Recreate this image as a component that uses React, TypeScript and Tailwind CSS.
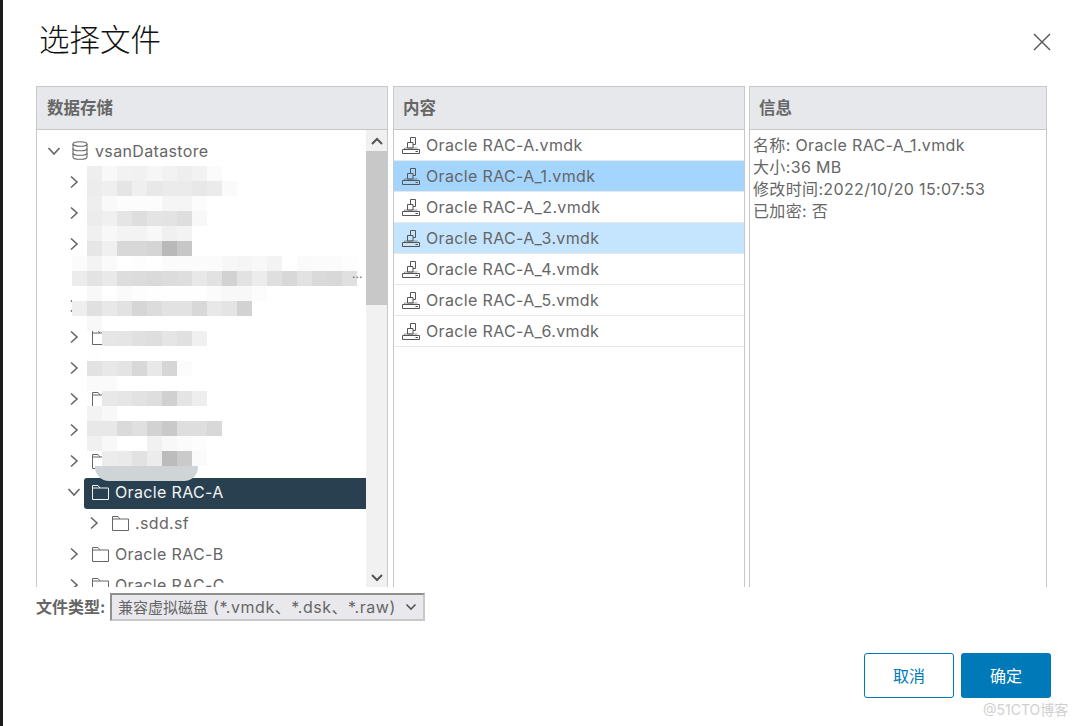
const sans = 'font-["Inter","Noto_Sans_CJK_SC",sans-serif]'

// pixelated cover over the blurred names, rows are 15px tall, cells start at x=72
const mosaic = [
  '.. ee f8 f2 f1 f6 f2 ee f2 fb',
  '.. ec ef e5 ef e8 eb eb e8 eb fa',
  '.. ee f9 fc fc fc f5 f5 fc',
  '.. ec f0 e5 de e4 e3 de f8',
  '.. f0 f8 f3 f3 f8 f0 f3',
  '.. e6 f0 d8 d8 d5 b9 c7',
  'fb f3 fa ff fd ff fb fb fb fb f7 f5 f8 f3 ff fa fb fb fd',
  'ec e3 e9 dd dc da dc de e8 e2 d2 e2 ec df d8 e2 da d8 e0',
  'ff f8 ff fa fd fe fe fe fe fb f8 f8 fc',
  'ee e0 e8 e2 d6 dc e2 e2 d8 e8 e4 d2',
  'ff f8',
  '.. .. e6 e5 e0 de e5 e0 f0',
  'ff fe ff ff ff ff ff ff ff',
  '.. e2 e8 e4 d8 e8 d6 fc',
  '.. fa fa ff ff',
  '.. .. e8 e6 e2 de d0 e4 ee',
  '.. f3 f8 ff ff ff ff ff',
  '.. e8 e8 da e0 d2 c9 de de d8',
  '.. f0 f8 ff ff f1 f8 fb fd',
  '.. .. ec ea e2 ec bc ca fa',
]

const treeRows: { depth: number; open?: boolean; folder?: boolean; label?: string; selected?: boolean; chevron?: boolean }[] = [
  { depth: 1, chevron: true },
  { depth: 1, chevron: true },
  { depth: 1, chevron: true },
  { depth: 1 },
  { depth: 1, chevron: true },
  { depth: 1, chevron: true, folder: true },
  { depth: 1, chevron: true },
  { depth: 1, chevron: true, folder: true },
  { depth: 1, chevron: true },
  { depth: 1, chevron: true, folder: true },
  { depth: 1, chevron: true, open: true, folder: true, label: 'Oracle RAC-A', selected: true },
  { depth: 2, chevron: true, folder: true, label: '.sdd.sf' },
  { depth: 1, chevron: true, folder: true, label: 'Oracle RAC-B' },
  { depth: 1, chevron: true, folder: true, label: 'Oracle RAC-C' },
]

const files = [
  'Oracle RAC-A.vmdk',
  'Oracle RAC-A_1.vmdk',
  'Oracle RAC-A_2.vmdk',
  'Oracle RAC-A_3.vmdk',
  'Oracle RAC-A_4.vmdk',
  'Oracle RAC-A_5.vmdk',
  'Oracle RAC-A_6.vmdk',
]

function Chevron({ open, className }: { open?: boolean; className?: string }) {
  return (
    <svg width="14" height="14" viewBox="0 0 14 14" fill="none" stroke="#666" strokeWidth="1.6" className={className}>
      {open ? <path d="M1.5 4 L7 10 L12.5 4" /> : <path d="M4 1.5 L10 7 L4 12.5" />}
    </svg>
  )
}

function FolderIcon({ color = '#666' }: { color?: string }) {
  return (
    <svg width="17" height="16" viewBox="0 0 17 16" fill="none" stroke={color} strokeWidth="1" className="shrink-0">
      <path d="M0.5 15.5 V1.5 H6 L8 4 H16.5 V15.5 Z M0.5 4 H8" />
    </svg>
  )
}

function DiskIcon() {
  return (
    <svg width="18" height="17" viewBox="0 0 18 17" fill="none" stroke="#555" strokeWidth="1" className="shrink-0">
      <path d="M0.5 12.5 H17.5 V16.5 H0.5 Z" />
      <path d="M13.5 14.5 H16" />
      <path d="M2.5 12.5 V11 H15.5" strokeOpacity="0.6" />
      <path d="M5.5 5.5 H11 V11 H5.5 Z" />
      <path d="M8.5 5.5 V0.5 H13.5 V7.5 H11" />
    </svg>
  )
}

function DatastoreIcon() {
  return (
    <svg width="16" height="19" viewBox="0 0 16 19" fill="none" stroke="#666" strokeWidth="1.1" className="shrink-0">
      <ellipse cx="8" cy="3" rx="7" ry="2.3" />
      <path d="M1 3 V16 C1 17.3 4 18.3 8 18.3 C12 18.3 15 17.3 15 16 V3" />
      <path d="M1 7.5 C1 8.8 4 9.8 8 9.8 C12 9.8 15 8.8 15 7.5" />
      <path d="M1 12 C1 13.3 4 14.3 8 14.3 C12 14.3 15 13.3 15 12" />
    </svg>
  )
}

function PanelHeader({ title, first }: { title: string; first?: boolean }) {
  return (
    <div
      className={`flex h-[43px] shrink-0 items-center border-b border-[#c8c8c8] bg-[#e6e8ec] text-[16.5px] font-bold text-[#666] ${
        first ? 'pl-[10px]' : 'pl-[9px]'
      }`}
    >
      {title}
    </div>
  )
}

function Mosaic() {
  return (
    <>
      <div className="pointer-events-none absolute left-[35px] top-[36px] flex flex-col">
        {mosaic.map((row, r) => (
          <div key={r} className="flex">
            {row.split(' ').map((c, i) => (
              <div
                key={i}
                className="h-[15px] w-[15px]"
                style={{ backgroundColor: c === '..' ? 'transparent' : `#${c}${c}${c}` }}
              />
            ))}
          </div>
        ))}
      </div>
      <div className="pointer-events-none absolute left-[58px] top-[336px] h-[15px] w-[103px] rounded-b-[14px] bg-[#cfd4d6]" />
    </>
  )
}

export default function App() {
  return (
    <div className={`flex h-[726px] w-[1080px] overflow-hidden bg-white ${sans}`}>
      <div className="w-[3px] shrink-0 bg-[#1a1a1a]" />
      <div className="flex min-w-0 flex-1 flex-col">
        <div className="relative flex h-[86px] shrink-0 items-center justify-between pb-[6px] pl-[36px] pr-[29px]">
          <h1 className="text-[30.5px] font-light leading-none text-[#111]">选择文件</h1>
          <svg width="18" height="18" viewBox="0 0 18 18" stroke="#555" strokeWidth="1.4" className="mt-[4px]">
            <path d="M1 1 L17 17 M17 1 L1 17" />
          </svg>
        </div>

        <div className="ml-[33px] flex h-[501px] shrink-0 gap-[5px]">
          <div className="flex w-[352px] flex-col border-x border-t border-[#c8c8c8]">
            <PanelHeader title="数据存储" first />
            <div className="relative flex min-h-0 flex-1 overflow-hidden">
              <div className="min-w-0 flex-1 pt-[5px] text-[16px] tracking-[0.35px] text-[#666]">
                <div className="flex h-[31px] items-center pl-[10px]">
                  <Chevron open />
                  <span className="ml-[11px]"><DatastoreIcon /></span>
                  <span className="ml-[7px]">vsanDatastore</span>
                </div>
                {treeRows.map((row, i) => (
                  <div
                    key={i}
                    className={`flex h-[31px] items-center ${row.depth === 2 ? 'pl-[50px]' : 'pl-[30px]'}`}
                  >
                    <span className="flex w-[14px] shrink-0">
                      {row.chevron && <Chevron open={row.open} />}
                    </span>
                    {row.selected ? (
                      <div className="ml-[3px] mt-[4px] flex h-[31px] flex-1 items-center gap-[6px] rounded-l-[3px] bg-[#28404f] pb-[4px] pl-[8px] text-[#f2f4f5]">
                        <FolderIcon color="#f2f4f5" />
                        <span>{row.label}</span>
                      </div>
                    ) : (
                      <div className="ml-[11px] flex items-center gap-[6px]">
                        {row.folder && <FolderIcon />}
                        {row.label && <span>{row.label}</span>}
                      </div>
                    )}
                  </div>
                ))}
              </div>
              <div className="flex w-[21px] shrink-0 flex-col bg-[#f1f1f1]">
                <div className="flex h-[21px] items-center justify-center bg-[#f0f0f0]">
                  <svg width="12" height="8" viewBox="0 0 12 8" fill="none" stroke="#555" strokeWidth="2">
                    <path d="M1 7 L6 2 L11 7" />
                  </svg>
                </div>
                <div className="h-[154px] bg-[#c8c8c8]" />
                <div className="flex flex-1 items-end justify-center pb-[5px]">
                  <svg width="12" height="8" viewBox="0 0 12 8" fill="none" stroke="#555" strokeWidth="2">
                    <path d="M1 1 L6 6 L11 1" />
                  </svg>
                </div>
              </div>
              <Mosaic />
              <span className="absolute left-[315px] top-[138px] text-[12px] leading-none text-[#666]">...</span>
            </div>
          </div>

          <div className="flex w-[352px] flex-col border-x border-t border-[#c8c8c8]">
            <PanelHeader title="内容" />
            <div className="flex flex-col text-[16px] tracking-[0.35px] text-[#666]">
              {files.map((name, i) => (
                <div
                  key={name}
                  className={`flex h-[31px] items-center gap-[6px] border-b border-[#e8e8e8] pl-[8px] ${
                    i === 1 ? 'bg-[#a3d5ff]' : i === 3 ? 'bg-[#c5e5ff]' : ''
                  }`}
                >
                  <DiskIcon />
                  <span>{name}</span>
                </div>
              ))}
            </div>
          </div>

          <div className="-ml-px flex w-[298px] flex-col border-x border-t border-[#c8c8c8]">
            <PanelHeader title="信息" />
            <div className="px-[3px] pt-[4px] text-[16px] leading-[22px] tracking-[0.35px] text-[#666]">
              <div>名称: Oracle RAC-A_1.vmdk</div>
              <div>大小:36 MB</div>
              <div>修改时间:2022/10/20 15:07:53</div>
              <div>已加密: 否</div>
            </div>
          </div>
        </div>

        <div className="ml-[33px] mt-[6px] flex h-[28px] shrink-0 items-center gap-[3px]">
          <span className="w-[71px] shrink-0 whitespace-nowrap text-[16px] font-bold text-[#666]">文件类型:</span>
          <div className="flex h-[28px] w-[315px] items-center justify-between border-2 border-b-[#c8c8cc] border-l-[#8f8f8f] border-r-[#c8c8cc] border-t-[#8f8f8f] bg-[#e9e9ed] pl-[6px] pr-[6px] text-[15px] text-[#666]">
            <span className="whitespace-nowrap">
              兼容虚拟磁盘<span className="text-[16px] tracking-[0.55px]"> (*.vmdk、*.dsk、*.raw)</span>
            </span>
            <svg width="12" height="8" viewBox="0 0 12 8" fill="none" stroke="#555" strokeWidth="1.6">
              <path d="M1.5 1.5 L6 6 L10.5 1.5" />
            </svg>
          </div>
        </div>

        <div className="ml-[861px] mt-[32px] flex shrink-0 gap-[7px] text-[16px]">
          <button type="button" className="h-[45px] w-[90px] rounded-[3px] border border-[#0079b8] bg-white text-[#0079b8]">
            取消
          </button>
          <button type="button" className="h-[45px] w-[90px] rounded-[3px] bg-[#0079b8] text-white">
            确定
          </button>
        </div>

        <div className="ml-[980px] mt-[3px] whitespace-nowrap text-[14px] leading-[17px] text-[#d0d0d0]">@51CTO博客</div>
      </div>
    </div>
  )
}
